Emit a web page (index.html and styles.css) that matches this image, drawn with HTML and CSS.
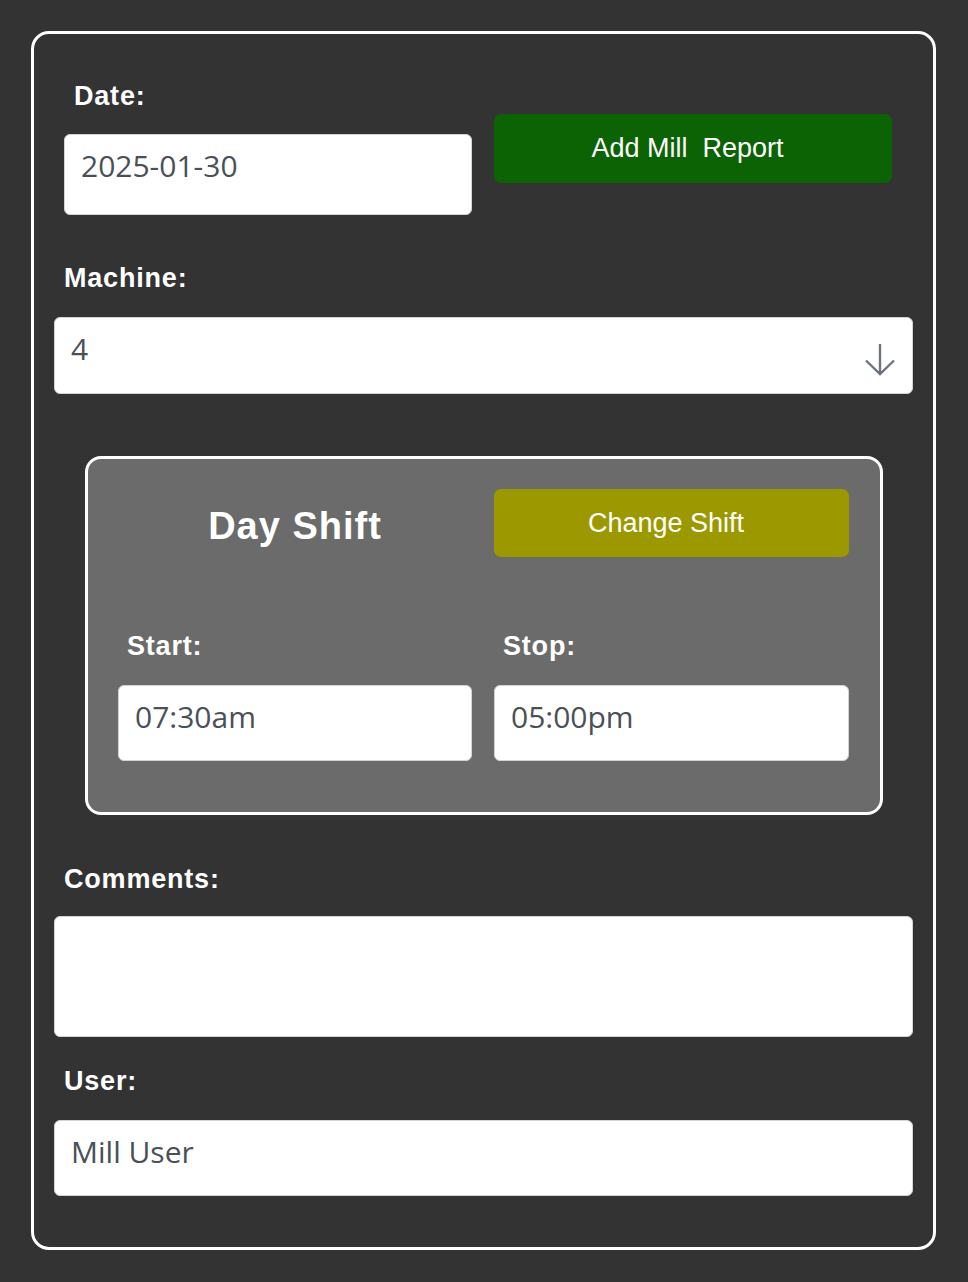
FILE: index.html
```html
<!DOCTYPE html>
<html lang="en">
<head>
<meta charset="utf-8">
<title>Mill Report</title>
<link rel="stylesheet" href="styles.css">
</head>
<body>
<div class="card">
  <div class="top-row">
    <div class="col">
      <label class="label">Date:</label>
      <div class="field field-date">2025-01-30</div>
    </div>
    <div class="col">
      <button class="btn btn-green">Add Mill&nbsp; Report</button>
    </div>
  </div>

  <label class="label label-machine">Machine:</label>
  <div class="select-wrap">
    <div class="field field-select">4</div>
    <svg class="select-arrow" width="32" height="34" viewBox="0 0 32 34">
      <path d="M16 1 V31 M2 17.5 L16 31 L30 17.5" fill="none" stroke="#6c757d" stroke-width="2.4"/>
    </svg>
  </div>

  <div class="shift">
    <div class="shift-grid">
      <div class="shift-title">Day Shift</div>
      <button class="btn btn-olive">Change Shift</button>
      <div class="shift-col">
        <label class="label">Start:</label>
        <div class="field field-time">07:30am</div>
      </div>
      <div class="shift-col">
        <label class="label">Stop:</label>
        <div class="field field-time">05:00pm</div>
      </div>
    </div>
  </div>

  <label class="label label-comments">Comments:</label>
  <div class="field field-area"></div>

  <label class="label label-user">User:</label>
  <div class="field field-user">Mill User</div>
</div>
</body>
</html>
```

FILE: styles.css
```css
* { box-sizing: border-box; }

html, body {
  margin: 0;
  padding: 0;
  background: #333333;
}

body {
  font-family: "Liberation Sans", Arial, sans-serif;
  padding: 31px 32px 31px 31px;
}

.card {
  border: 3px solid #ffffff;
  border-radius: 18px;
  padding: 47px 20px 51px 20px;
}

.label {
  display: block;
  color: #ffffff;
  font-family: "Liberation Sans", Arial, sans-serif;
  font-weight: bold;
  font-size: 27px;
  line-height: 30px;
  letter-spacing: 0.8px;
  padding-left: 10px;
  margin-bottom: 24px;
}

.top-row {
  display: grid;
  grid-template-columns: 408px 398px;
  column-gap: 22px;
  padding: 0 10px;
}

.top-row .label { margin-bottom: 23px; }

.field {
  background: #ffffff;
  border: 1px solid #ced4da;
  border-radius: 6px;
  color: #495057;
  font-family: "Open Sans", "Noto Sans", sans-serif;
  font-size: 30px;
  line-height: 42px;
  padding: 10px 16px;
}

.field-date { height: 81px; }
.field-select { height: 77px; }
.field-time { height: 76px; }
.field-user { height: 76px; }
.field-area { height: 121px; }

.btn {
  display: flex;
  align-items: center;
  justify-content: center;
  border: none;
  border-radius: 7px;
  color: #ffffff;
  font-family: "Liberation Sans", Arial, sans-serif;
  font-size: 27px;
  width: 100%;
  padding: 0 11px 0 0;
}

.btn-green {
  background: #0b6304;
  height: 69px;
  margin-top: 33px;
}

.btn-olive {
  background: #9c9900;
  height: 68px;
}

.label-machine { margin-top: 48px; }

.select-wrap { position: relative; }

.select-arrow {
  position: absolute;
  right: 17px;
  top: 26px;
}

.shift {
  margin: 62px 30px 0 31px;
  background: #6b6b6b;
  border: 3px solid #ffffff;
  border-radius: 16px;
  padding: 30px 30px 51px 30px;
}

.shift-grid {
  display: grid;
  grid-template-columns: 354px 355px;
  column-gap: 22px;
  row-gap: 74px;
  align-items: center;
}

.shift-title {
  text-align: center;
  color: #ffffff;
  font-weight: bold;
  font-size: 38px;
  letter-spacing: 1px;
  padding-top: 6px;
}

.shift-col .label { padding-left: 9px; }

.label-comments { margin-top: 49px; margin-bottom: 22px; }
.label-user { margin-top: 29px; }
```
